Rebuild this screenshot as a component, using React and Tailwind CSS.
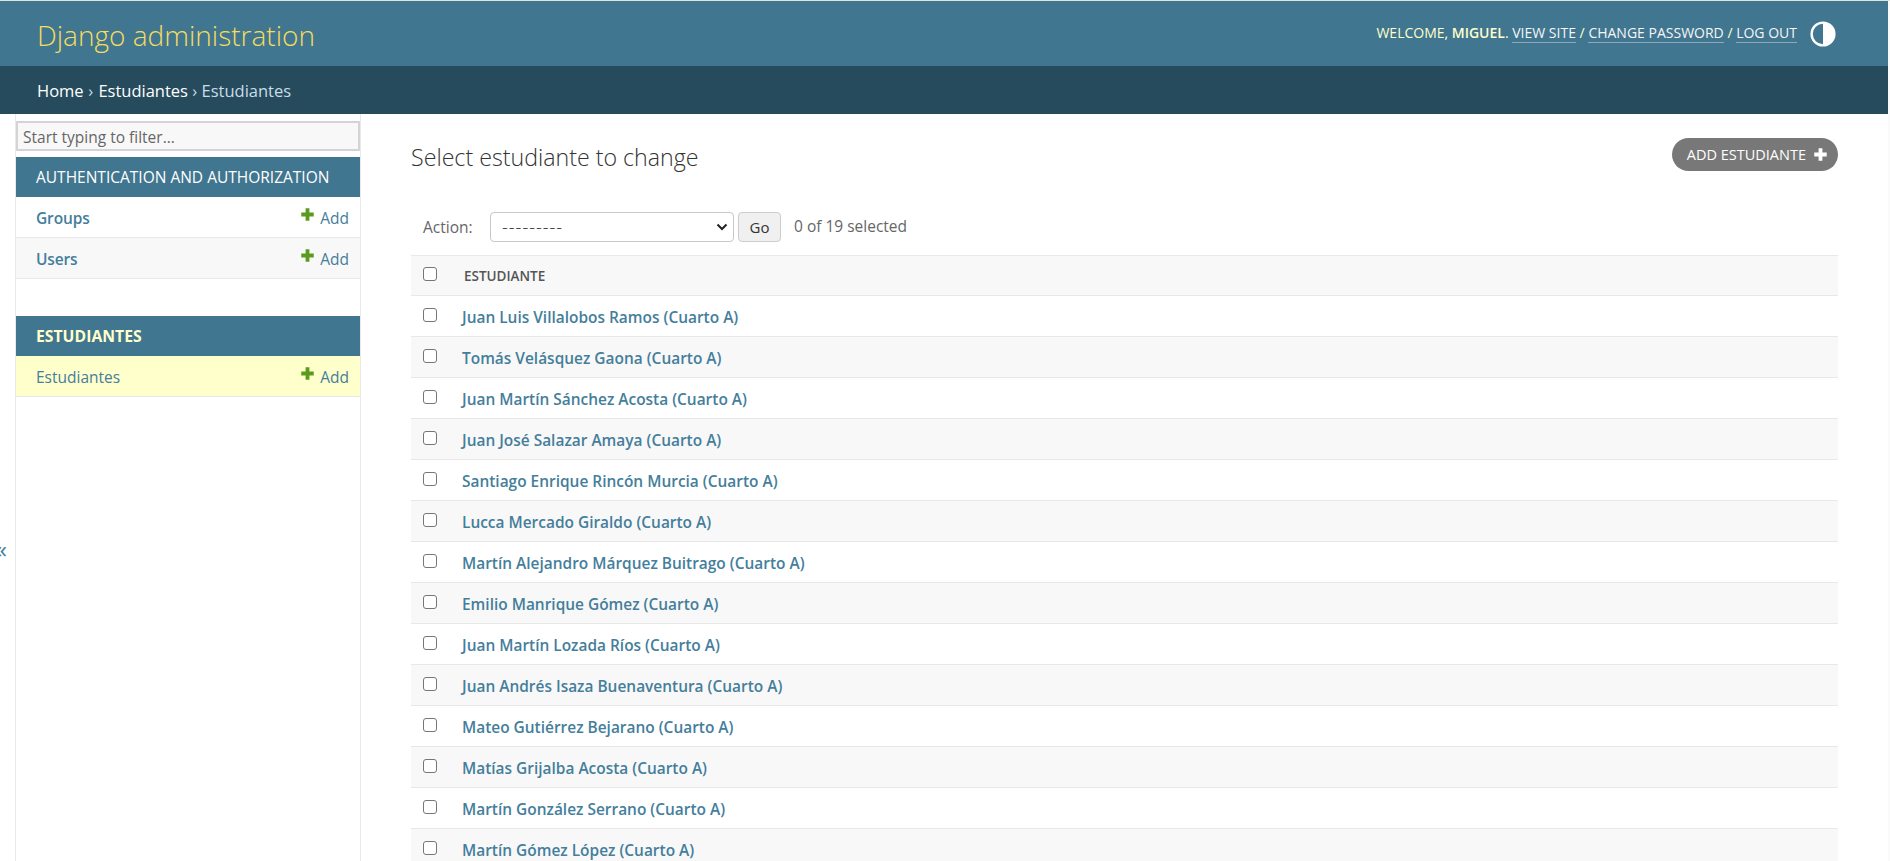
const names = [
  "Juan Luis Villalobos Ramos (Cuarto A)",
  "Tomás Velásquez Gaona (Cuarto A)",
  "Juan Martín Sánchez Acosta (Cuarto A)",
  "Juan José Salazar Amaya (Cuarto A)",
  "Santiago Enrique Rincón Murcia (Cuarto A)",
  "Lucca Mercado Giraldo (Cuarto A)",
  "Martín Alejandro Márquez Buitrago (Cuarto A)",
  "Emilio Manrique Gómez (Cuarto A)",
  "Juan Martín Lozada Ríos (Cuarto A)",
  "Juan Andrés Isaza Buenaventura (Cuarto A)",
  "Mateo Gutiérrez Bejarano (Cuarto A)",
  "Matías Grijalba Acosta (Cuarto A)",
  "Martín González Serrano (Cuarto A)",
  "Martín Gómez López (Cuarto A)",
];

function Plus({ className, color }) {
  return (
    <svg viewBox="0 0 12 12" className={className}>
      <path d="M4.25 0.25h3.5v4h4v3.5h-4v4h-3.5v-4h-4v-3.5h4z" fill={color} />
    </svg>
  );
}

function SideRow({ label, alt, active }) {
  const bg = active ? "bg-[#ffffcc]" : alt ? "bg-[#f8f8f8]" : "bg-white";
  return (
    <div className={`${bg} h-[41px] border-b border-[#e8e8e8] flex items-center justify-between pt-[4px] pl-5 pr-[11px]`}>
      <span className={`text-[15.5px] text-[#447e9b] ${active ? "font-medium" : "font-semibold tracking-[-0.15px]"}`}>{label}</span>
      <span className="flex items-center gap-[6px] text-[15.5px] text-[#447e9b]">
        <Plus className="w-[13px] h-[13px] -mt-[9px]" color="#5b9a1f" />
        Add
      </span>
    </div>
  );
}

function Check() {
  return <span className="block w-[14px] h-[14px] border border-[#767676] rounded-[3px] bg-white" />;
}

export default function App() {
  return (
    <div className="h-[861px] overflow-hidden bg-[#fafafa] font-['Open_Sans','Noto_Sans',sans-serif] text-[#333]">
      <div className="h-px bg-[#e4e4d4]" />
      <div className="mr-[2px] bg-white h-[860px] overflow-hidden">
        <header className="h-[65px] bg-[#417690] flex items-center justify-between pl-[37px] pr-[52px]">
          <h1 className="text-[28px] font-light text-[#f5dd5d] mt-[3px]">Django administration</h1>
          <div className="flex items-center gap-[13px] text-[#ffffcc] text-[14px]">
            <span className="-mt-[2px]">
              WELCOME, <strong className="font-semibold">MIGUEL</strong>.{" "}
              <a className="text-[#f5f5f5] border-b border-[#8fa9b8]">VIEW SITE</a> /{" "}
              <a className="text-[#f5f5f5] border-b border-[#8fa9b8]">CHANGE PASSWORD</a> /{" "}
              <a className="text-[#f5f5f5] border-b border-[#8fa9b8]">LOG OUT</a>
            </span>
            <svg viewBox="0 0 24 24" className="w-[26px] h-[26px]">
              <circle cx="12" cy="12" r="10.5" fill="none" stroke="#fff" strokeWidth="2.2" />
              <path d="M12 1.5a10.5 10.5 0 0 1 0 21z" fill="#fff" />
            </svg>
          </div>
        </header>
        <nav className="h-[48px] bg-[#264b5d] flex items-center pl-[37px] pt-[2px] text-[16.5px] text-[#c8dde8]">
          <a className="text-white">Home</a>
          <span className="tracking-[0.4px]">&nbsp;›&nbsp;</span>
          <a className="text-white">Estudiantes</a>
          <span>&nbsp;›&nbsp;</span>
          <span>Estudiantes</span>
        </nav>
        <div className="flex h-[747px]">
          <aside className="relative w-[361px] shrink-0 pl-[15px]">
            <div className="h-full border-l border-r border-[#e8e8e8]">
              <div className="pt-[7px] pb-[6px]">
                <div className="h-[30px] border-2 border-[#d4d4d4] bg-[#f8f8f8] text-[#666] text-[15.5px] pl-[5px] pt-[4px] flex items-center">
                  Start typing to filter...
                </div>
              </div>
              <section>
                <div className="h-[40px] bg-[#417690] text-white text-[15.5px] pl-5 pt-[2px] flex items-center">
                  AUTHENTICATION AND AUTHORIZATION
                </div>
                <SideRow label="Groups" />
                <SideRow label="Users" alt />
              </section>
              <section className="mt-[37px]">
                <div className="h-[40px] bg-[#417690] text-[#ffffcc] font-bold text-[15.75px] pl-5 pt-[2px] flex items-center">
                  ESTUDIANTES
                </div>
                <SideRow label="Estudiantes" active />
              </section>
            </div>
            <span className="absolute -left-[5px] top-[423px] text-[24px] leading-none text-[#447e9b]">«</span>
          </aside>
          <main className="flex-1 min-w-0 pl-[50px] pr-[50px]">
            <div className="flex items-start justify-between h-[98px]">
              <h2 className="mt-[26px] text-[23.2px] font-light text-[#333]">Select estudiante to change</h2>
              <a className="mt-[24px] h-[33px] pl-[15px] pr-[11px] rounded-full bg-[#787878] text-white text-[14.5px] flex items-center gap-[8px]">
                ADD ESTUDIANTE
                <Plus className="w-[13px] h-[13px]" color="#fff" />
              </a>
            </div>
            <div className="h-[30px] mb-[13px] pl-3 flex items-center text-[15.5px] text-[#666]">
              <span className="w-[67px] pt-[2px]">Action:</span>
              <div className="w-[244px] h-[30px] border border-[#c8c8c8] rounded-[4px] bg-white flex items-center justify-between pl-[11px] pr-[5px] text-[#333]">
                <span className="text-[18px] font-light tracking-[1px]">---------</span>
                <svg viewBox="0 0 12 12" className="w-[12px] h-[12px]">
                  <path d="M1.5 3.5 6 8l4.5-4.5" fill="none" stroke="#222" strokeWidth="2" />
                </svg>
              </div>
              <div className="ml-[4px] w-[43px] h-[30px] border border-[#ccc] rounded-[4px] bg-[#f0f0f0] flex items-center justify-center text-[15px] text-[#333]">
                Go
              </div>
              <span className="ml-[13px] -mt-[1px] text-[#666]">0 of 19 selected</span>
            </div>
            <div className="h-[41px] bg-[#f8f8f8] border-y border-[#e8e8e8] flex items-center">
              <div className="w-[53px] pl-[12px] -mt-[3px]"><Check /></div>
              <span className="pt-[2px] text-[13.5px] font-semibold text-[#555]">ESTUDIANTE</span>
            </div>
            {names.map((n, i) => (
              <div key={n} className={`h-[41px] border-b border-[#e8e8e8] flex items-center ${i % 2 ? "bg-[#f8f8f8]" : "bg-white"}`}>
                <div className="w-[51px] pl-[12px] -mt-[3px]"><Check /></div>
                <a className="pt-[4px] text-[15.45px] font-semibold text-[#447e9b]">{n}</a>
              </div>
            ))}
          </main>
        </div>
      </div>
    </div>
  );
}
